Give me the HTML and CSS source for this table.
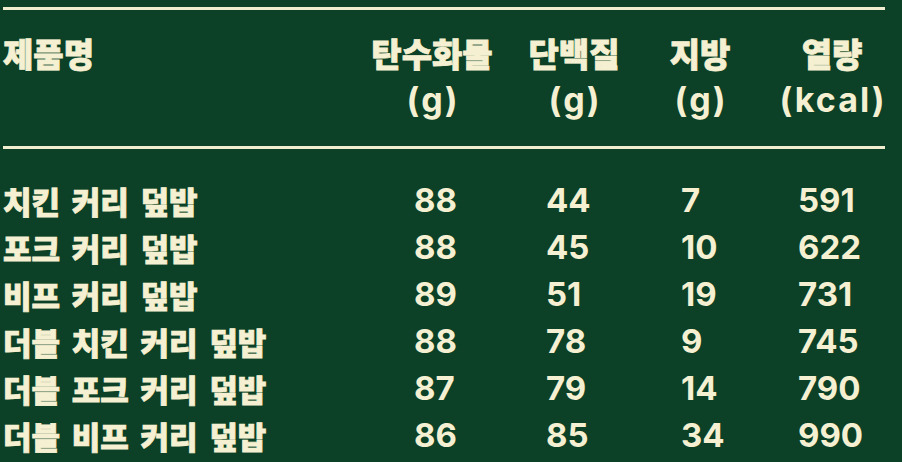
FILE: index.html
```html
<!DOCTYPE html>
<html lang="ko">
<head>
<meta charset="utf-8">
<link rel="stylesheet" href="styles.css">
</head>
<body>
<div class="table">
  <div class="rule"></div>
  <div class="grid head">
    <div class="cell name"><span class="ko hk">제품명</span></div>
    <div class="cell hc"><span class="ko hk">탄수화물</span><span class="unit">(g)</span></div>
    <div class="cell hc"><span class="ko hk">단백질</span><span class="unit">(g)</span></div>
    <div class="cell hc"><span class="ko hk">지방</span><span class="unit">(g)</span></div>
    <div class="cell hc"><span class="ko hk">열량</span><span class="unit">(kcal)</span></div>
  </div>
  <div class="rule rule2"></div>
  <div class="grid body">
    <div class="cell name ko">치킨 커리 덮밥</div><div class="cell num c1">88</div><div class="cell num c2">44</div><div class="cell num c3">7</div><div class="cell num c4">591</div>
    <div class="cell name ko">포크 커리 덮밥</div><div class="cell num c1">88</div><div class="cell num c2">45</div><div class="cell num c3">10</div><div class="cell num c4">622</div>
    <div class="cell name ko">비프 커리 덮밥</div><div class="cell num c1">89</div><div class="cell num c2">51</div><div class="cell num c3">19</div><div class="cell num c4">731</div>
    <div class="cell name ko">더블 치킨 커리 덮밥</div><div class="cell num c1">88</div><div class="cell num c2">78</div><div class="cell num c3">9</div><div class="cell num c4">745</div>
    <div class="cell name ko">더블 포크 커리 덮밥</div><div class="cell num c1">87</div><div class="cell num c2">79</div><div class="cell num c3">14</div><div class="cell num c4">790</div>
    <div class="cell name ko">더블 비프 커리 덮밥</div><div class="cell num c1">86</div><div class="cell num c2">85</div><div class="cell num c3">34</div><div class="cell num c4">990</div>
  </div>
</div>
</body>
</html>
```
FILE: styles.css
```css
html, body {
  margin: 0;
  padding: 0;
  background: #0c4027;
  overflow: hidden;
}
body {
  width: 902px;
  height: 462px;
  color: #f5f0d2;
  font-family: "Noto Sans CJK KR", sans-serif;
}
.table {
  padding-left: 3px;
}
.rule {
  width: 882px;
  height: 3px;
  margin-top: 7px;
  background: #f1edcf;
}
.rule2 {
  margin-top: 21px;
}
.grid {
  display: grid;
  grid-template-columns: 355px 148px 136px 116px 148px;
}
.head {
  padding-top: 21px;
}
.body {
  padding-top: 28px;
}
.cell {
  height: 47px;
  line-height: 47px;
  white-space: nowrap;
}
.head .cell {
  height: 94px;
}
.hc {
  display: flex;
  flex-direction: column;
  align-items: center;
}
.ko {
  font-family: "Noto Sans CJK KR", sans-serif;
  font-weight: 900;
  font-size: 31px;
  line-height: 47px;
  word-spacing: 3px;
  -webkit-text-stroke: 0.8px currentColor;
}
.hk {
  font-size: 33px;
  line-height: 45px;
}
.unit {
  font-family: Inter, "Noto Sans", sans-serif;
  font-weight: 700;
  font-size: 34px;
  line-height: 47px;
  letter-spacing: 2px;
  padding-left: 2px;
}
.num {
  font-family: Inter, "Noto Sans", sans-serif;
  font-weight: 700;
  font-size: 33px;
}
.c1 { padding-left: 56px; }
.c2 { padding-left: 40px; }
.c3 { padding-left: 39px; }
.c4 { padding-left: 40px; }
```
